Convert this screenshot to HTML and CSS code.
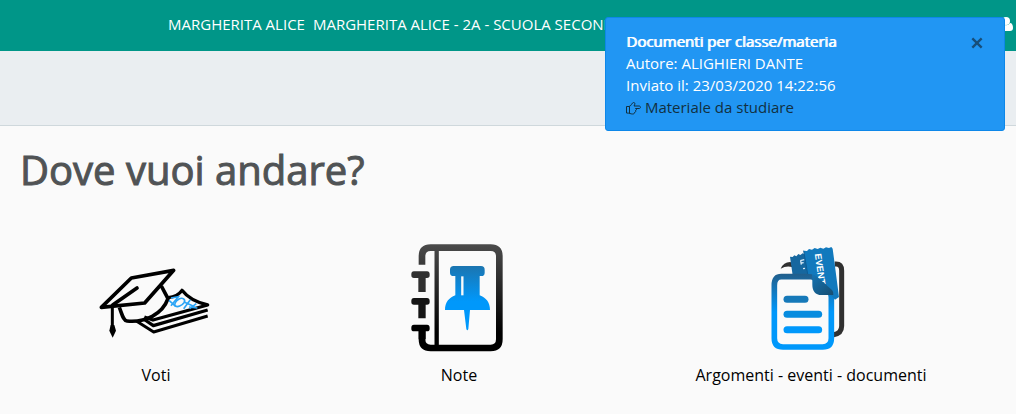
FILE: index.html
```html
<!DOCTYPE html>
<html lang="it">
<head>
    <meta charset="UTF-8">
    <meta name="viewport" content="width=device-width, initial-scale=1">
    <title>Dove vuoi andare?</title>
    <link rel="stylesheet" href="styles.css">
</head>
<body>
<header class="topbar">
    <span class="user">MARGHERITA ALICE</span>
    <span class="school">MARGHERITA ALICE - 2A - SCUOLA SECONDARIA</span>
    <svg class="user-icon" viewBox="0 0 14 14" aria-hidden="true">
        <circle cx="7" cy="4" r="4"/>
        <path d="M3 6C1 6 0 8 0 11c0 2 1 3 3 3h8c2 0 3-1 3-3 0-3-1-5-3-5-2 3-6 3-8 0z"/>
    </svg>
</header>
<div class="subbar"></div>

<main class="content">
    <h1>Dove vuoi andare?</h1>
    <nav class="menu">
        <a href="#voti" class="item">
            <svg class="icon icon-voti" viewBox="0 0 390 285" aria-hidden="true">
                <g fill="none" stroke="#000" stroke-width="10" stroke-linejoin="round">
                    <path d="M238 128c18-2 32-9 41-22 17 22 45 37 77 44L192 195l-26-9"/>
                    <path d="M164 192l29 20 163-47"/>
                    <path d="M142 198l52 33 162-48" stroke-width="9"/>
                    <path d="M37 157L127 69l127-23-87 98z" stroke-width="11"/>
                    <path d="M71 150l73-51" stroke-width="11" stroke-linecap="round"/>
                    <path d="M91 157c8 20 12 40 23 41 55 5 106-20 123-67l-20-38" stroke-width="11"/>
                    <path d="M70 152v70" stroke-width="9"/>
                </g>
                <path d="M65 210h11l5 17-10 21-10-21z"/>
                <g fill="none" stroke="#2ba4f5" stroke-width="5">
                    <path d="M246 129l22-4-22 27M240 136l20 18"/>
                    <path d="M270 132c-10 6-16 16-11 21 7 5 19-1 26-10 6-9-4-17-15-11z"/>
                    <path d="M304 134l-20 27M287 142l30 13M322 146l-20 15M300 156l25 3"/>
                </g>
            </svg>
            <span>Voti</span>
        </a>
        <a href="#note" class="item">
            <svg class="icon icon-note" viewBox="0 0 345 375" aria-hidden="true">
                <defs>
                    <linearGradient id="cover" gradientUnits="userSpaceOnUse" x1="0" y1="28" x2="0" y2="340">
                        <stop offset="0" stop-color="#4b4b4b"/>
                        <stop offset=".85" stop-color="#000"/>
                    </linearGradient>
                    <linearGradient id="pin" x1="0" y1="0" x2="0" y2="1">
                        <stop offset="0" stop-color="#1b75b0"/>
                        <stop offset=".55" stop-color="#0098fb"/>
                    </linearGradient>
                </defs>
                <g fill="none" stroke="url(#cover)">
                    <path d="M66 89V64q0-26 26-26h180q26 0 26 26v249q0 26-26 26H92q-26 0-26-26v-30" stroke-width="20"/>
                    <path d="M110 40v298" stroke-width="13"/>
                </g>
                <g fill="#303030">
                    <path d="M42 109h39q8 0 8 9v3q0 8-8 8h-4v42H55v-42H42q-8 0-8-8v-3q0-9 8-9z"/>
                    <path d="M42 189h39q8 0 8 9v3q0 8-8 8h-4v41H55v-41H42q-8 0-8-8v-3q0-9 8-9z" fill="#151515"/>
                    <path d="M42 269h39q8 0 8 9v3q0 8-8 8h-4v24H56v-24H42q-8 0-8-8v-3q0-9 8-9z" fill="#000"/>
                </g>
                <path d="M161 93h82q11 0 11 11v9q0 10-10 10h-5v58c19 7 31 21 31 44h-60l-5 57q-3 8-6 0l-7-57h-57c0-23 12-37 31-44v-58h-5q-11 0-11-10v-9q0-11 11-11z" fill="url(#pin)"/>
                <path d="M187 124v57" fill="none" stroke="#fafafa" stroke-width="7"/>
            </svg>
            <span>Note</span>
        </a>
        <a href="#documenti" class="item">
            <svg class="icon icon-documenti" viewBox="0 0 285 345" aria-hidden="true">
                <defs>
                    <linearGradient id="sheet" gradientUnits="userSpaceOnUse" x1="0" y1="102" x2="0" y2="330">
                        <stop offset="0" stop-color="#215f8c"/>
                        <stop offset=".5" stop-color="#0098fb"/>
                    </linearGradient>
                    <linearGradient id="fold" x1="0" y1="0" x2="1" y2="1">
                        <stop offset="0" stop-color="#1474b4"/>
                        <stop offset="1" stop-color="#174d70"/>
                    </linearGradient>
                </defs>
                <path d="M224 72h4q17 0 17 20v166q0 22-24 26" fill="none" stroke="#303030" stroke-width="15"/>
                <path d="M62 86q9-21 30-20l6 16q-18-6-36 4z" fill="#303030"/>
                <path d="M90 50l8 1 5-5 6 3 6-7 6 3 7-5 9 4 12 75-48 8z" fill="#16679f"/>
                <path d="M121 62l12-3M122 62l2 12M124 69l7-1M129 86l6-1" stroke="#d8e9f4" stroke-width="4" fill="none"/>
                <path d="M64 110h89q7 0 14 7l40 37q7 7 7 17v124q0 26-26 26H69q-26 0-26-26V136q0-26 21-26z" fill="#fafafa" stroke="url(#sheet)" stroke-width="17" stroke-linejoin="round"/>
                <path d="M131 32l10 1 6-6 9 2 8-5 9 3 8-4 9 3 8-4 9 2 7-3 4 5 19 145-12 8-70-76-12-1z" fill="#1179bd"/>
                <path d="M131 32l12 70" stroke="#0d5c94" stroke-width="3"/>
                <text class="ticket" transform="translate(164 42) rotate(82)">EVENT</text>
                <path d="M156 102q9 2 17 10l43 38q6 7 4 15h-36c-18 0-27-12-27-31v-20z" fill="url(#fold)"/>
                <g stroke-width="21" stroke-linecap="round">
                    <path d="M81 178h54" stroke="#1679b9"/>
                    <path d="M81 223h95" stroke="#078cdf"/>
                    <path d="M81 269h95" stroke="#0098fb"/>
                </g>
            </svg>
            <span>Argomenti - eventi - documenti</span>
        </a>
    </nav>
</main>

<div class="toast" role="alert">
    <div class="toast-body">
        <strong>Documenti per classe/materia</strong>
        <span>Autore: ALIGHIERI DANTE</span>
        <span>Inviato il: 23/03/2020 14:22:56</span>
        <a href="#materiale">
            <svg class="hand" viewBox="0 0 30 28" aria-hidden="true">
                <path d="M1 11h5c4 0 6-8 9-8 4 0 3 4 1 7h10c4 0 4 5 0 5h-7c3 1 2 4 0 4 1 2 0 4-2 4 0 2-1 3-4 3-4 0-5-2-12-2H1z"/>
                <path d="M7 11v13"/>
            </svg>
            Materiale da studiare</a>
    </div>
    <button type="button" class="close" aria-label="Chiudi">
        <svg viewBox="0 0 12 12" aria-hidden="true"><path d="M2 2l8 8M10 2l-8 8"/></svg>
    </button>
</div>
</body>
</html>
```
FILE: styles.css
```css
*{
    box-sizing: border-box;
}
body{
    margin: 0;
    background: #fafafa;
    color: #000;
    font-family: "Open Sans", "Noto Sans", sans-serif;
    font-size: 15px;
    line-height: 22px;
}
a{
    color: inherit;
    text-decoration: none;
}
.topbar{
    display: flex;
    align-items: center;
    gap: 8px;
    height: 51px;
    padding: 0 3px 4px 168px;
    background: #009688;
    color: #fff;
    white-space: nowrap;
}
.user-icon{
    width: 14px;
    height: 14px;
    margin-left: auto;
    fill: #fff;
}
.subbar{
    height: 75px;
    background: #eaeef1;
    border-bottom: 1px solid #cfd8dc;
}
h1{
    margin: 0;
    padding: 16px 20px 0;
    color: #505355;
    font-size: 40px;
    font-weight: 400;
    line-height: 56px;
    -webkit-text-stroke: 1px #505355;
}
.menu{
    display: grid;
    grid-template-columns: 312fr 294fr 410fr;
    padding-top: 37px;
}
.item{
    display: flex;
    flex-direction: column;
    align-items: center;
    justify-content: flex-end;
    gap: 4px;
    font-size: 16px;
}
.icon{
    display: block;
}
.icon-voti{
    width: 130px;
    margin: 0 4px 10px 0;
}
.icon-note{
    width: 115px;
    margin-right: 4px;
}
.icon-documenti{
    width: 95px;
    margin: 0 8px 5px 0;
}
.ticket{
    fill: #fff;
    font: bold 28px "Liberation Sans", sans-serif;
}

/* notification over the page */
.toast{
    position: absolute;
    top: 17px;
    right: 11px;
    display: flex;
    align-items: flex-start;
    justify-content: space-between;
    width: 400px;
    padding: 12px 20px;
    background: #2196f3;
    border: 1px solid #0d87e9;
    border-radius: 3px;
    color: #fff;
}
.toast-body{
    display: flex;
    flex-direction: column;
}
.toast-body strong{
    font-weight: 400;
    text-shadow: 1px 0 #fff;
}
.toast-body a{
    color: #12303f;
}
.hand{
    width: 15px;
    height: 14px;
    vertical-align: -2px;
    fill: none;
    stroke: #12303f;
    stroke-width: 2;
}
.close{
    padding: 6px 0;
    border: 0;
    background: none;
    cursor: pointer;
}
.close svg{
    display: block;
    width: 14px;
    height: 14px;
    fill: none;
    stroke: #174e79;
    stroke-width: 2;
}
```
